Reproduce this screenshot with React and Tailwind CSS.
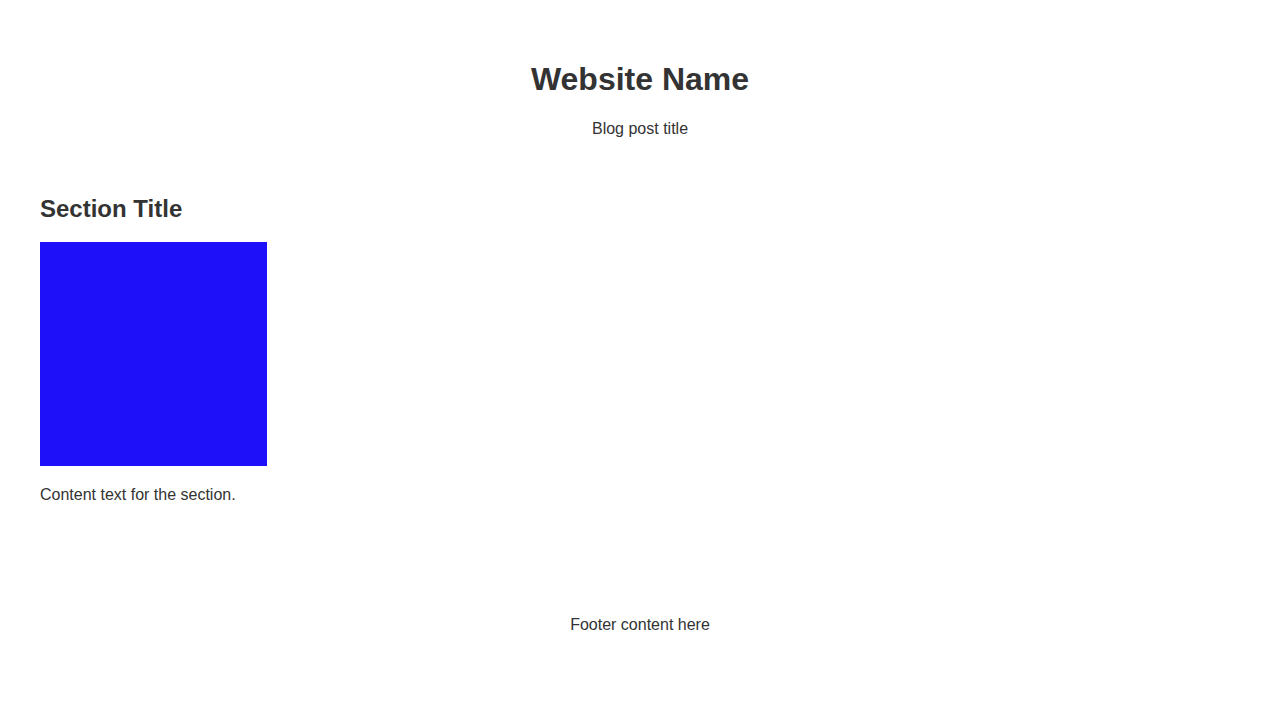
export default function App() {
  return (
    <div className="min-h-screen bg-white text-[#333333] font-['Liberation_Sans',Arial,sans-serif]">
      <header className="pt-[55px] px-10 text-center">
        <h1 className="text-[32px] leading-[48px] font-bold">Website Name</h1>
        <p className="mt-[14px] text-base leading-6">Blog post title</p>
      </header>

      <main className="px-10 pt-[50px]">
        <section>
          <h2 className="text-2xl leading-9 font-bold">Section Title</h2>
          <div className="mt-[15px] w-[227px] h-[224px] bg-[#1e10f8]"></div>
          <p className="mt-[17px] text-base leading-6">Content text for the section.</p>
        </section>
      </main>

      <footer className="pt-[106px] px-10 text-center">
        <p className="text-base leading-6">Footer content here</p>
      </footer>
    </div>
  );
}
